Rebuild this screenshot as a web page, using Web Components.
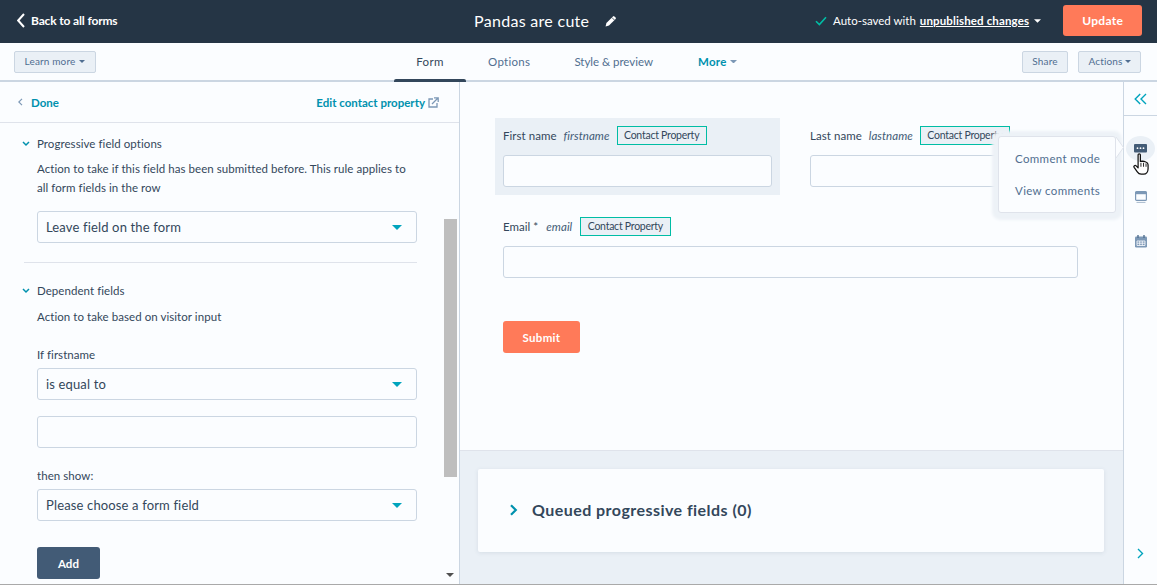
<!DOCTYPE html>
<html lang="en">
<head>
<meta charset="utf-8">
<title>Pandas are cute</title>
<style>
    html, body { margin: 0; height: 100%; }
    body {
        width: 1157px;
        height: 585px;
        overflow: hidden;
        background: #fbfdff;
        color: #33475b;
        font: 12px/19px Lato, "Open Sans", sans-serif;
    }
    form-editor { height: 585px; }
</style>
</head>
<body>
<form-editor>
    <top-bar></top-bar>
    <sub-nav></sub-nav>
    <div style="display:flex;flex:1;min-height:0">
        <side-panel></side-panel>
        <form-preview></form-preview>
        <tool-rail></tool-rail>
    </div>
</form-editor>

<script>
const caret = (w, h, c) => `<svg width="${w}" height="${h}" viewBox="0 0 8 4" style="display:block"><path d="M0 0h8L4 4z" fill="${c}"/></svg>`;

class FormEditor extends HTMLElement {
    constructor() {
        super();
        this.attachShadow({ mode: 'open' }).innerHTML = `
            <style>
                :host { display: flex; flex-direction: column; border-bottom: 1px solid #a9a9a9; box-sizing: border-box; }
            </style>
            <slot></slot>`;
    }
}

class TopBar extends HTMLElement {
    constructor() {
        super();
        this.attachShadow({ mode: 'open' }).innerHTML = `
            <style>
                :host { display: flex; align-items: center; box-sizing: border-box; height: 43px; padding-bottom: 2px; flex: none; background: #253545; color: #fff; white-space: nowrap; }
                :host > * { flex: none; }
                .back { display: flex; align-items: center; gap: 6px; margin-left: 17px; width: 457px; font-weight: 700; font-size: 12px; letter-spacing: -.15px; }
                .title { font-size: 16px; letter-spacing: .3px; width: 131px; }
                .save { display: flex; align-items: center; margin-left: 198px; font-size: 11.5px; }
                .save svg { margin-right: 6px; }
                .save b { text-decoration: underline; margin-left: 4px; letter-spacing: .13px; }
                .save .c { margin-left: 5px; }
                .save .c svg { margin: 0; }
                button { all: unset; box-sizing: border-box; margin-left: 22px; width: 79px; height: 31px; background: #ff7a59; border-radius: 3px; text-align: center; font-weight: 700; font-size: 12px; letter-spacing: .3px; }
            </style>
            <div class="back">
                <svg width="8" height="15" viewBox="0 0 8 15"><path d="M7 1 1.2 7.5 7 14" fill="none" stroke="#fff" stroke-width="2"/></svg>
                <span>Back to all forms</span>
            </div>
            <div class="title">Pandas are cute</div>
            <svg width="12" height="12" viewBox="0 0 12 12"><path d="M.6 11.4 1.4 8 8 1.4a1 1 0 0 1 1.4 0l1.2 1.2a1 1 0 0 1 0 1.4L4 10.6z" fill="#fff"/><path d="M7 2.6 9.4 5" stroke="#253545" stroke-width=".8"/></svg>
            <div class="save">
                <svg width="12" height="10" viewBox="0 0 12 10"><path d="M1 5.2 4.4 8.6 11 1.2" fill="none" stroke="#00bda5" stroke-width="1.6"/></svg>
                <span>Auto-saved with</span><b>unpublished changes</b>
                <span class="c">${caret(7, 4, '#fff')}</span>
            </div>
            <button>Update</button>`;
    }
}

class SubNav extends HTMLElement {
    constructor() {
        super();
        this.attachShadow({ mode: 'open' }).innerHTML = `
            <style>
                :host { display: flex; align-items: center; height: 39px; flex: none; box-sizing: border-box; border-bottom: 2px solid #cbd6e2; font-size: 11.5px; color: #516f90; }
                .btn { box-sizing: border-box; display: flex; align-items: center; justify-content: center; height: 22px; background: #eaf0f6; border: 1px solid #cbd6e2; border-radius: 2px; font-size: 10px; color: #506e91; letter-spacing: .15px; }
                .learn { margin-left: 14px; width: 82px; gap: 4px; }
                .tabs { display: flex; align-items: center; height: 37px; margin-left: 298px; letter-spacing: .3px; }
                .tab { position: relative; line-height: 37px; color: #516f90; }
                .tab.on { width: 72px; text-align: center; color: #33475b; margin-right: 22px; }
                .tab.on::after { content: ""; position: absolute; left: 0; right: 0; bottom: -2px; height: 3px; background: #33475b; border-radius: 2px 2px 0 0; }
                .opt { margin-right: 44px; }
                .style { margin-right: 45px; letter-spacing: -.03px; }
                .more { display: flex; align-items: center; gap: 3px; color: #0091ae; font-weight: 700; font-size: 11.5px; }
                .share { margin-left: auto; width: 46px; }
                .actions { margin: 0 16px 0 10px; width: 63px; gap: 2px; }
            </style>
            <div class="btn learn">Learn more ${caret(6, 3, '#506e91')}</div>
            <div class="tabs">
                <div class="tab on">Form</div>
                <div class="tab opt">Options</div>
                <div class="tab style">Style &amp; preview</div>
                <div class="tab more">More ${caret(7, 3.5, '#7c98b6')}</div>
            </div>
            <div class="btn share">Share</div>
            <div class="btn actions">Actions ${caret(6, 3, '#506e91')}</div>`;
    }
}

class FieldSelect extends HTMLElement {
    constructor() {
        super();
        const arrow = this.hasAttribute('plain') ? '' : caret(10, 5, '#00a4bd');
        this.attachShadow({ mode: 'open' }).innerHTML = `
            <style>
                :host { display: flex; align-items: center; justify-content: space-between; box-sizing: border-box; width: 380px; height: 32px; padding: 0 14px 0 8px; background: #fbfdff; border: 1px solid #cbd6e2; border-radius: 3px; font-size: 13px; letter-spacing: .15px; color: #33475b; }
            </style>
            <span><slot></slot></span>${arrow}`;
    }
}

class SidePanel extends HTMLElement {
    constructor() {
        super();
        const down = `<svg width="8" height="6" viewBox="0 0 8 6"><path d="M1 1l3 3 3-3" fill="none" stroke="#0091ae" stroke-width="1.5"/></svg>`;
        this.attachShadow({ mode: 'open' }).innerHTML = `
            <style>
                :host { position: relative; display: flex; flex-direction: column; flex: none; width: 460px; box-sizing: border-box; border-right: 1px solid #cbd6e2; font-size: 11.5px; letter-spacing: .06px; overflow: hidden; }
                .head { display: flex; align-items: center; justify-content: space-between; flex: none; height: 41px; box-sizing: border-box; border-bottom: 1px solid #dfe3eb; padding: 0 20px 0 18px; color: #0091ae; font-weight: 700; font-size: 11.5px; letter-spacing: 0; }
                .head div { display: flex; align-items: center; }
                .done svg { margin-right: 8px; }
                .edit svg { margin-left: 3px; }
                .body { padding: 11px 0 0 37px; }
                h4 { position: relative; margin: 0; font: inherit; line-height: 19px; }
                h4 svg { position: absolute; left: -15px; top: 7px; }
                p { margin: 0; width: 375px; line-height: 19px; }
                .first p { margin-top: 6px; }
                field-select { margin-top: 14px; }
                hr { border: 0; border-top: 1px solid #dfe3eb; margin: 19px 0 18px -13px; width: 393px; }
                .dep p { margin-top: 7px; }
                label { display: block; line-height: 19px; }
                .if { margin-top: 19px; }
                .if + field-select { margin-top: 4px; }
                .gap { margin-top: 16px; }
                .then { margin-top: 18px; }
                .then + field-select { margin-top: 4px; }
                button { all: unset; display: block; box-sizing: border-box; margin-top: 26px; width: 63px; height: 32px; background: #425b76; border-radius: 3px; color: #fff; text-align: center; font-weight: 700; }
                .thumb { position: absolute; left: 444px; top: 137px; width: 13px; height: 258px; background: #bebebe; }
                .arrow { position: absolute; left: 446px; top: 491px; }
            </style>
            <div class="head">
                <div class="done">
                    <svg width="5" height="8" viewBox="0 0 5 8"><path d="M4 .8.8 4 4 7.2" fill="none" stroke="#7c98b6" stroke-width="1.2"/></svg>
                    Done
                </div>
                <div class="edit">
                    Edit contact property
                    <svg width="11" height="11" viewBox="0 0 11 11"><path d="M5 2H1v8h8V6" fill="none" stroke="#7c98b6" stroke-width="1.3"/><path d="M4 7l5.5-5.5M6 .8h4.2V5" fill="none" stroke="#7c98b6" stroke-width="1.3"/></svg>
                </div>
            </div>
            <div class="body">
                <section class="first">
                    <h4>${down}Progressive field options</h4>
                    <p>Action to take if this field has been submitted before. This rule applies to all form fields in the row</p>
                    <field-select>Leave field on the form</field-select>
                </section>
                <hr>
                <section class="dep">
                    <h4>${down}Dependent fields</h4>
                    <p>Action to take based on visitor input</p>
                    <label class="if">If firstname</label>
                    <field-select>is equal to</field-select>
                    <field-select plain class="gap"></field-select>
                    <label class="then">then show:</label>
                    <field-select>Please choose a form field</field-select>
                    <button>Add</button>
                </section>
            </div>
            <div class="thumb"></div>
            <svg class="arrow" width="8" height="4" viewBox="0 0 8 4"><path d="M0 0h8L4 4z" fill="#505050"/></svg>`;
    }
}

class FormField extends HTMLElement {
    constructor() {
        super();
        this.attachShadow({ mode: 'open' }).innerHTML = `
            <style>
                :host { display: block; box-sizing: border-box; font-size: 11.5px; letter-spacing: .05px; }
                .row { display: flex; align-items: center; height: 19px; }
                i { margin: 0 var(--after, 7px) 0 var(--before, 7px); color: #425b76; }
                .tag { box-sizing: border-box; height: 19px; line-height: 17px; padding: 0 6.5px; background: #eaf0f6; border: 1px solid #00bda5; font-size: 10.5px; letter-spacing: -.25px; white-space: nowrap; }
                .input { height: 32px; margin-top: 10px; background: #fbfdff; border: 1px solid #cbd6e2; border-radius: 3px; box-sizing: border-box; }
            </style>
            <div class="row">
                <span>${this.getAttribute('label')}</span>
                <i>${this.getAttribute('name')}</i>
                <span class="tag">Contact Property</span>
            </div>
            <div class="input"></div>`;
    }
}

class FormPreview extends HTMLElement {
    constructor() {
        super();
        this.attachShadow({ mode: 'open' }).innerHTML = `
            <style>
                :host { display: flex; flex-direction: column; flex: 1; min-width: 0; }
                .canvas { flex: none; height: 369px; box-sizing: border-box; padding: 36px 0 0 35px; border-bottom: 1px solid #dfe3eb; }
                .row { display: flex; }
                .sel { width: 285px; box-sizing: border-box; padding: 8px 8px 8px; background: #eaf0f6; }
                .last { width: 268px; margin: 8px 0 0 30px; }
                .email { width: 575px; margin: 22px 0 0 8px; --before: 8px; --after: 8px; }
                button { all: unset; display: block; box-sizing: border-box; margin: 43px 0 0 8px; width: 77px; height: 32px; background: #ff7a59; border-radius: 3px; color: #fff; text-align: center; font-size: 11.5px; font-weight: 700; letter-spacing: .3px; }
                .queue { flex: 1; background: #eaf0f6; padding: 18px 19px 0 18px; }
                .card { display: flex; align-items: center; gap: 14px; box-sizing: border-box; height: 83px; padding: 0 0 2px 31px; background: #fbfdff; border-radius: 2px; box-shadow: 0 1px 4px rgba(66,91,118,.12); font-size: 16px; font-weight: 700; letter-spacing: .45px; }
            </style>
            <div class="canvas">
                <div class="row">
                    <form-field class="sel" label="First name" name="firstname"></form-field>
                    <form-field class="last" label="Last name" name="lastname"></form-field>
                </div>
                <form-field class="email" label="Email *" name="email"></form-field>
                <button>Submit</button>
            </div>
            <div class="queue">
                <div class="card">
                    <svg width="9" height="12" viewBox="0 0 9 12"><path d="M2 1.2 6.8 6 2 10.8" fill="none" stroke="#0091ae" stroke-width="2.2"/></svg>
                    Queued progressive fields (0)
                </div>
            </div>`;
    }
}

class PopoverMenu extends HTMLElement {
    constructor() {
        super();
        this.attachShadow({ mode: 'open' }).innerHTML = `
            <style>
                :host { position: absolute; left: -126px; top: 54px; width: 118px; height: 77px; box-sizing: border-box; padding: 12px 0 0 16px; background: #fbfdff; border: 1px solid #dfe3eb; border-radius: 3px; box-shadow: 0 1px 3px 6px #edf2f7; font-size: 11.5px; letter-spacing: .35px; color: #516f90; }
                svg { position: absolute; right: -9px; top: 0; }
                div { height: 19px; line-height: 19px; margin-bottom: 13px; white-space: nowrap; }
            </style>
            <div>Comment mode</div>
            <div>View comments</div>
            <svg width="8" height="21" viewBox="0 0 8 21"><path d="M0 0 7.500 10.500 0 21z" fill="#fbfdff"/><path d="M0 0 7.500 10.500 0 21" fill="none" stroke="#dfe3eb"/></svg>`;
    }
}

class ToolRail extends HTMLElement {
    constructor() {
        super();
        this.attachShadow({ mode: 'open' }).innerHTML = `
            <style>
                :host { position: relative; display: flex; flex-direction: column; align-items: center; flex: none; width: 34px; box-sizing: border-box; border-left: 1px solid #cbd6e2; }
                .top { display: flex; align-items: center; justify-content: center; flex: none; width: 100%; height: 33px; border-bottom: 1px solid #cbd6e2; }
                .tool { display: flex; align-items: center; justify-content: center; width: 29px; height: 25px; border-radius: 50%; }
                .on { margin-top: 20px; background: #eaf0f6; }
                .win { margin-top: 23px; }
                .cal { margin-top: 20px; }
                .next { margin-top: auto; margin-bottom: 25px; }
                .hand { position: absolute; left: 9px; top: 71px; }
            </style>
            <div class="top">
                <svg width="13" height="12" viewBox="0 0 13 12"><path d="M6.2 1 1.2 6l5 5M12 1 7 6l5 5" fill="none" stroke="#00a4bd" stroke-width="1.4"/></svg>
            </div>
            <div class="tool on">
                <svg width="13" height="10" viewBox="0 0 13 10"><path d="M1 0h11a1 1 0 0 1 1 1v6.500a1 1 0 0 1-1 1H1a1 1 0 0 1-1-1V1a1 1 0 0 1 1-1z" fill="#425b76"/><circle cx="3.500" cy="4.200" r=".9" fill="#fff"/><circle cx="6.500" cy="4.200" r=".9" fill="#fff"/><circle cx="9.500" cy="4.200" r=".9" fill="#fff"/></svg>
            </div>
            <div class="tool win">
                <svg width="12" height="12" viewBox="0 0 12 12"><rect x=".6" y=".6" width="10.800" height="8.800" rx="1" fill="none" stroke="#7c98b6" stroke-width="1.200"/><rect x=".6" y=".6" width="10.800" height="2.600" fill="#7c98b6"/><path d="M1.500 11.400h9" stroke="#a8bacd"/></svg>
            </div>
            <div class="tool cal">
                <svg width="12" height="13" viewBox="0 0 12 13"><rect x="0" y="1.500" width="12" height="11" rx="1.200" fill="#7c98b6"/><path d="M3 0v3M9 0v3" stroke="#516f90" stroke-width="1.400"/><path d="M2 6h8v4.500H2zM4.700 6v4.500M7.300 6v4.500M2 8.200h8" fill="none" stroke="#fbfdff" stroke-width=".8"/></svg>
            </div>
            <svg class="next" width="7" height="11" viewBox="0 0 7 11"><path d="M1 1l4.500 4.500L1 10" fill="none" stroke="#00a4bd" stroke-width="1.400"/></svg>
            <popover-menu></popover-menu>
            <svg class="hand" width="17" height="23" viewBox="0 0 15 20"><path d="M4.500 1.500c0-1.200 2-1.200 2 0v5.800l1.700-.3 1.600.3 1.500.5c1.200.4 2 1.200 2 2.500v3.500c0 2.500-1.500 4.700-4 4.700H7.200c-1.600 0-2.600-.8-3.400-2L1 12.500c-.8-1.200.8-2.300 1.800-1.300l1.700 1.800z" fill="#fff" stroke="#111" stroke-width="1.100" stroke-linejoin="round"/><path d="M7 8.500V12M9.300 8.500V12M11.500 9V12" stroke="#111" stroke-width=".8"/></svg>`;
    }
}

customElements.define('form-editor', FormEditor);
customElements.define('top-bar', TopBar);
customElements.define('sub-nav', SubNav);
customElements.define('field-select', FieldSelect);
customElements.define('side-panel', SidePanel);
customElements.define('form-field', FormField);
customElements.define('form-preview', FormPreview);
customElements.define('popover-menu', PopoverMenu);
customElements.define('tool-rail', ToolRail);
</script>
</body>
</html>
